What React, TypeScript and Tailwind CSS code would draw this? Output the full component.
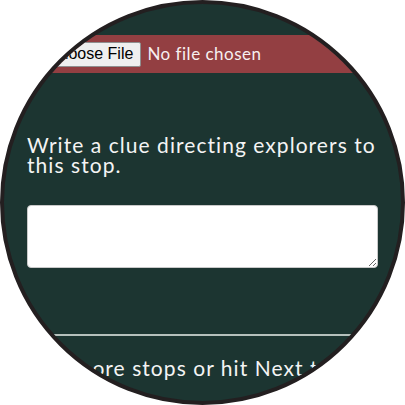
export default function App() {
  return (
    <div className="w-[405px] h-[405px] bg-white">
      <div
        className="w-[405px] h-[405px] rounded-full border-4 border-[#231f20] bg-[#1c3531] overflow-hidden flex flex-col text-white"
        style={{ fontFamily: "Lato, 'Open Sans', sans-serif" }}
      >
        {/* file picker bar */}
        <div className="mt-[31px] h-[38px] bg-[#933f42] flex items-center pl-[36px] gap-[6px]">
          <span
            className="h-[25px] px-[7px] flex items-center bg-[#efefef] border border-[#8f8f8f] rounded-[2px] text-[16px] text-black"
            style={{ fontFamily: "'Liberation Sans', Arial, sans-serif" }}
          >
            Choose File
          </span>
          <span className="text-[17px] tracking-[0.5px] text-[#f7f0f0]">No file chosen</span>
        </div>

        <div className="px-[23px]">
          <p className="mt-[62px] text-[21px] leading-[20px] tracking-[1.05px] text-[#f4f4f4]">
            Write a clue directing explorers to this stop.
          </p>
          <textarea className="mt-[30px] block w-[351px] h-[63px] bg-white rounded-[4px] border border-[#c9c9c9] text-black" />
        </div>

        <div className="mt-[66px] h-[2px] bg-[#b5c0bc]" />

        <p className="mt-[22px] px-[23px] text-[21px] leading-[20px] tracking-[1.05px] whitespace-nowrap text-[#f4f4f4]">
          Add more stops or hit Next to finish.
        </p>
      </div>
    </div>
  );
}
